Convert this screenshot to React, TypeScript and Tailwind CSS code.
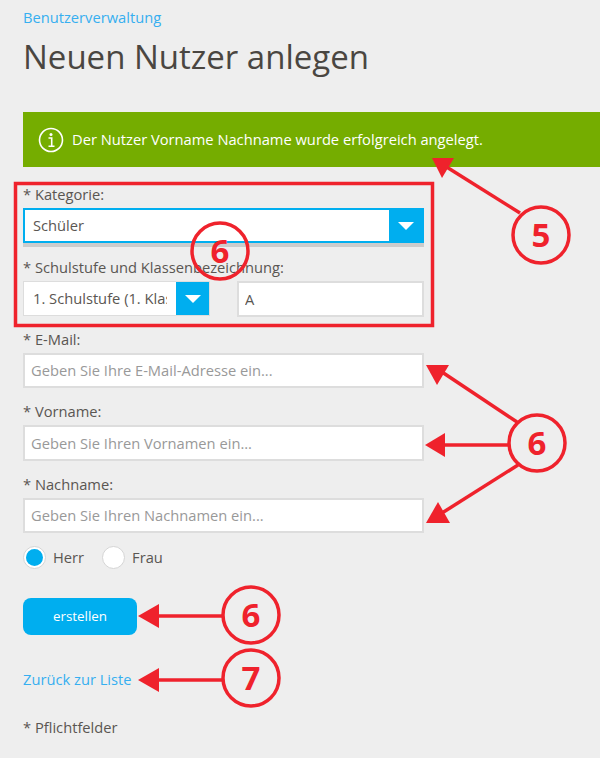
const inputClass =
  'block w-full h-[35.5px] bg-white border-2 border-[#dddddd] px-[6px] text-[14.7px] text-[#5a5652] placeholder:text-[#999999] outline-none'

function Caret() {
  return <span className="w-0 h-0 border-x-[8px] border-x-transparent border-t-[8px] border-t-white" />
}

function Field({ label, placeholder }: { label: string; placeholder: string }) {
  return (
    <div>
      <label className="block text-[14.7px] leading-[19px] text-[#5a5652] mb-[4px]">{label}</label>
      <input className={inputClass} placeholder={placeholder} />
    </div>
  )
}

function Radio({ label, checked }: { label: string; checked?: boolean }) {
  return (
    <div className="flex items-center gap-[7px]">
      <span className="flex items-center justify-center w-[23px] h-[23px] rounded-full bg-white border border-[#d5d5d5]">
        {checked && <span className="w-[17px] h-[17px] rounded-full bg-[#00aeef]" />}
      </span>
      <span className="text-[14.7px] text-[#5a5652]">{label}</span>
    </div>
  )
}

function Badge({ cx, cy, n }: { cx: number; cy: number; n: string }) {
  return (
    <g>
      <circle cx={cx} cy={cy} r={28} fill="none" stroke="#ef222c" strokeWidth={3.5} />
      <text
        x={cx}
        y={cy + 12}
        textAnchor="middle"
        fontFamily="'Open Sans', sans-serif"
        fontWeight={700}
        fontSize={33}
        fill="#ef222c"
      >
        {n}
      </text>
    </g>
  )
}

function Annotations() {
  const red = '#ef222c'
  const lines = [
    [520, 213, 445, 166],
    [517, 422, 442, 372],
    [508, 445, 445, 445],
    [518, 465, 442, 513],
    [222, 616, 158, 616],
    [222, 680, 158, 680],
  ]
  const heads = [
    '432,158 454,158 442,178',
    '426,365 449,365 437,385',
    '425,445 445,433 445,457',
    '426,523 450,523 438,502',
    '138,616 159,604 159,628',
    '138,680 159,668 159,692',
  ]
  return (
    <svg className="absolute left-0 top-0 pointer-events-none" width={600} height={758}>
      <rect x={15.5} y={183.5} width={417} height={142} fill="none" stroke={red} strokeWidth={3.5} />
      {lines.map((l, i) => (
        <line key={i} x1={l[0]} y1={l[1]} x2={l[2]} y2={l[3]} stroke={red} strokeWidth={3.5} />
      ))}
      {heads.map((p, i) => (
        <polygon key={i} points={p} fill={red} />
      ))}
      <Badge cx={541} cy={235} n="5" />
      <Badge cx={220} cy={251} n="6" />
      <Badge cx={537} cy={443} n="6" />
      <Badge cx={251} cy={615} n="6" />
      <Badge cx={251} cy={678} n="7" />
    </svg>
  )
}

export default function App() {
  return (
    <div className="relative w-[600px] h-[758px] overflow-hidden bg-[#eeeeee] font-['Open_Sans',sans-serif]">
      <div className="pl-[23px] pt-[8px]">
        <a className="block text-[14.7px] leading-[19px] text-[#36aff0]">Benutzerverwaltung</a>
        <h1 className="mt-[7px] text-[33px] leading-[45px] font-normal text-[#4a4641]">Neuen Nutzer anlegen</h1>

        {/* success message */}
        <div className="mt-[33px] h-[55px] flex items-center gap-[8px] pl-[15px] bg-[#75ad00] text-white">
          <svg width={26} height={26} viewBox="0 0 26 26" fill="none">
            <circle cx={13} cy={13} r={11.5} stroke="white" strokeWidth={1.6} />
            <circle cx={13} cy={7.5} r={1.5} fill="white" />
            <path d="M10.5 11h3.2v8M10.5 19.3h6" stroke="white" strokeWidth={1.6} />
          </svg>
          <span className="text-[14.7px]">Der Nutzer Vorname Nachname wurde erfolgreich angelegt.</span>
        </div>

        <div className="w-[401px] mt-[18px]">
          <label className="block text-[14.7px] leading-[19px] text-[#5a5652] mb-[4px]">* Kategorie:</label>
          <div className="flex h-[35px] bg-white border-2 border-[#00aeef] shadow-[0_4px_0_#cccccc]">
            <span className="flex-1 flex items-center pl-[8px] text-[14.7px] text-[#5a5652]">Schüler</span>
            <span className="w-[33px] flex items-center justify-center bg-[#00aeef]">
              <Caret />
            </span>
          </div>

          <label className="block mt-[15px] text-[14.7px] leading-[19px] text-[#5a5652] mb-[4px]">
            * Schulstufe und Klassenbezeichnung:
          </label>
          <div className="flex justify-between">
            <div className="flex w-[187px] h-[35px] bg-white border border-[#dddddd]">
              <span className="block flex-1 ml-[9px] mr-[9px] leading-[33px] overflow-hidden whitespace-nowrap text-[14.7px] text-[#5a5652]">
                1. Schulstufe (1. Klasse)
              </span>
              <span className="w-[33px] shrink-0 flex items-center justify-center bg-[#00aeef]">
                <Caret />
              </span>
            </div>
            <input className={inputClass + ' !w-[187px]'} defaultValue="A" />
          </div>

          <div className="mt-[13px] flex flex-col gap-[14px]">
            <Field label="* E-Mail:" placeholder="Geben Sie Ihre E-Mail-Adresse ein..." />
            <Field label="* Vorname:" placeholder="Geben Sie Ihren Vornamen ein..." />
            <Field label="* Nachname:" placeholder="Geben Sie Ihren Nachnamen ein..." />
          </div>

          <div className="mt-[13px] flex gap-[18px]">
            <Radio label="Herr" checked />
            <Radio label="Frau" />
          </div>

          <button className="block mt-[29px] w-[114px] h-[37px] rounded-[8px] bg-[#00aeef] text-white text-[13.4px]">
            erstellen
          </button>

          <a className="block mt-[35px] text-[14.7px] leading-[19px] text-[#36aff0]">Zurück zur Liste</a>
          <p className="mt-[29px] text-[14.7px] leading-[19px] text-[#5a5652]">* Pflichtfelder</p>
        </div>
      </div>
      <Annotations />
    </div>
  )
}
